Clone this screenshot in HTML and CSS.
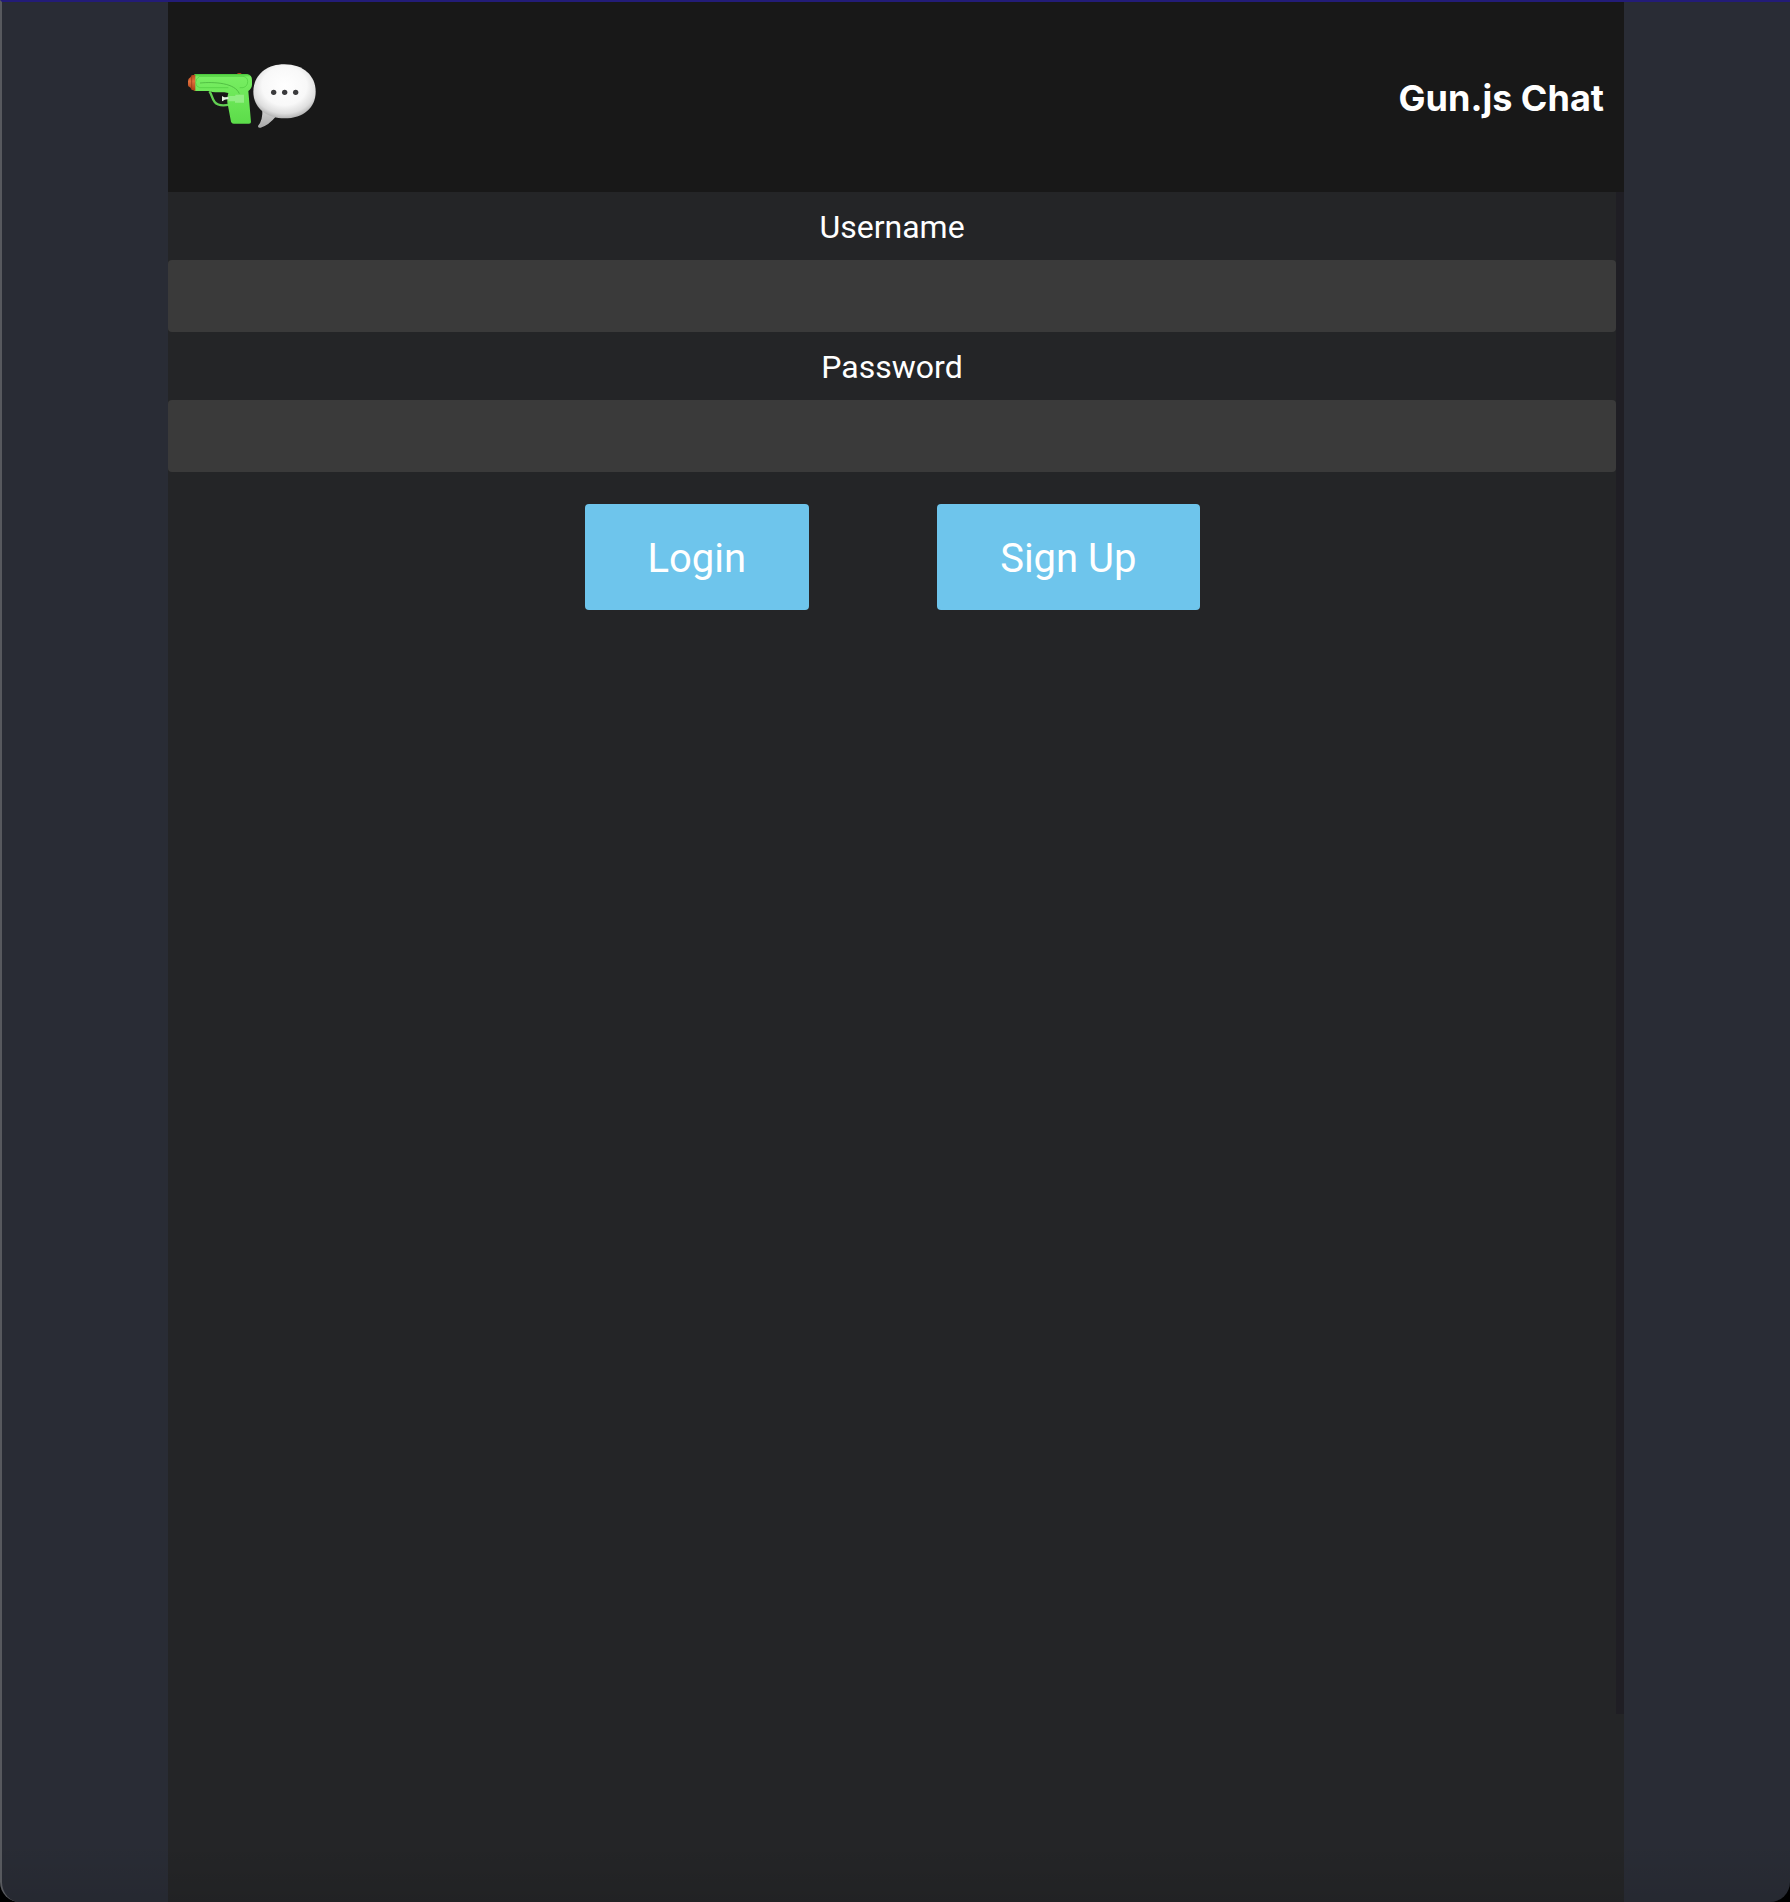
FILE: index.html
```html
<!DOCTYPE html>
<html lang="en">
<head>
<meta charset="utf-8">
<meta name="viewport" content="width=device-width, initial-scale=1">
<title>Gun.js Chat</title>
<link rel="stylesheet" href="styles.css">
</head>
<body>
<div class="window">
  <div class="app">
    <header class="header">
      <svg class="logo" viewBox="84 69 384 204" role="img" aria-label="Water pistol and speech bubble">
        <defs>
          <linearGradient id="barrel" x1="0" y1="0" x2="0" y2="1">
            <stop offset="0" stop-color="#45c337"/>
            <stop offset=".06" stop-color="#78ee62"/>
            <stop offset=".6" stop-color="#68e454"/>
            <stop offset="1" stop-color="#5cdc4a"/>
          </linearGradient>
          <linearGradient id="nozzle" x1="0" y1="0" x2="0" y2="1">
            <stop offset="0" stop-color="#b9451b"/>
            <stop offset=".4" stop-color="#e2703c"/>
            <stop offset="1" stop-color="#a83b14"/>
          </linearGradient>
          <radialGradient id="bubble" cx=".5" cy=".4" r=".6">
            <stop offset="0" stop-color="#ffffff"/>
            <stop offset=".6" stop-color="#f8f8f8"/>
            <stop offset=".85" stop-color="#dedede"/>
            <stop offset="1" stop-color="#b4b4b4"/>
          </radialGradient>
          <linearGradient id="tail" x1="0" y1="0" x2="0" y2="1">
            <stop offset="0" stop-color="#d2d2d2"/>
            <stop offset="1" stop-color="#a8a8a8"/>
          </linearGradient>
        </defs>
        <path d="M231 103q0-4 7-4t7 4z" fill="#b9451b"/>
        <path d="M148 154c8 10 8 23 16 32c9 11 25 12 44 8" fill="none" stroke="#62cf52" stroke-width="7"/>
        <path d="M103 102H262Q276 104 276 121V134Q275 146 265 153L273 246Q273 251 267 251H221Q215 251 213 245L202 187Q200 173 205 159L193 157H166Q156 157 149 153H103Z" fill="url(#barrel)"/>
        <path d="M119 109H249Q263 111 263 125T249 143H239M119 109Q106 116 107 128Q108 141 119 143H205" fill="none" stroke="#50cc41" stroke-width="2"/>
        <path d="M120 129C165 125 225 129 238 161" fill="none" stroke="#41a936" stroke-width="2"/>
        <path d="M106 104V153L95 149Q92 142 85 139Q82 127 86 116Q92 113 95 106Z" fill="url(#nozzle)"/>
        <path d="M95 107V148" stroke="#8e3515" stroke-width="2"/>
        <path d="M186 168q3 3 8 4l12-1v6l-12 2q-5 3-8 5z" fill="#e4f3e2"/>
        <path d="M205 168H226V164H252V188H225V184H205Z" fill="#9bf08f" opacity=".8"/>
        <path d="M307 208Q309 241 294 258Q293 265 302 263Q326 256 349 228Z" fill="url(#tail)"/>
        <path d="M373 73C430 73 467 107 467 155C467 203 430 235 373 235C318 235 280 203 280 155C280 107 318 73 373 73Z" fill="url(#bubble)"/>
        <g fill="#3b3b3d"><circle cx="341" cy="157" r="8"/><circle cx="374" cy="157" r="8"/><circle cx="407" cy="157" r="8"/></g>
      </svg>
      <h1 class="title">Gun.js Chat</h1>
    </header>
    <main class="main">
      <form class="form">
        <label class="label" for="username">Username</label>
        <input class="input" id="username" name="username" type="text">
        <label class="label" for="password">Password</label>
        <input class="input" id="password" name="password" type="password">
        <div class="actions">
          <button class="button" type="button">Login</button>
          <button class="button" type="button">Sign Up</button>
        </div>
      </form>
    </main>
  </div>
</div>
</body>
</html>
```
FILE: styles.css
```css
* {
  box-sizing: border-box;
}

html {
  background: #000;
}

body {
  margin: 0;
  color: #fff;
  font-family: Roboto, "Liberation Sans", sans-serif;
  font-size: 32px;
}

.window {
  display: flex;
  justify-content: center;
  min-height: 100vh;
  overflow: hidden;
  background: linear-gradient(transparent calc(100% - 60px), rgba(0, 0, 0, 0.08)) #292c35;
  border-top: 2px solid #231c78;
  border-left: 2px solid #57595e;
  border-radius: 0 0 20px 20px;
}

.app {
  flex: 1;
  max-width: 1456px;
  background: linear-gradient(transparent calc(100% - 60px), rgba(0, 0, 0, 0.08)) #242527;
}

.header {
  display: flex;
  align-items: center;
  justify-content: space-between;
  height: 10vh;
  min-height: 100px;
  padding: 0 20px;
  background: #181818;
}

.logo {
  width: 128px;
  height: 68px;
}

.title {
  margin: 0;
  padding-top: 2px;
  font-family: Inter, Roboto, sans-serif;
  font-size: 36px;
  font-weight: 700;
  line-height: 48px;
}

.main {
  min-height: 80vh;
  border-right: 8px solid #1f1e24;
}

.form {
  display: flex;
  flex-direction: column;
}

.label {
  padding: 11px 0 9px;
  line-height: 48px;
  text-align: center;
}

.input {
  width: 100%;
  height: 72px;
  padding: 0 16px;
  color: inherit;
  font: inherit;
  background: #3a3a3a;
  border: 0;
  border-radius: 4px;
}

.actions {
  display: flex;
  flex-wrap: wrap;
  justify-content: center;
  gap: 32px 128px;
  padding: 32px 0;
}

.button {
  padding: 31px 63px 27px;
  color: #fff;
  font-family: inherit;
  font-size: 40px;
  line-height: 48px;
  background: #6ec5ec;
  border: 0;
  border-radius: 4px;
  cursor: pointer;
}
```
